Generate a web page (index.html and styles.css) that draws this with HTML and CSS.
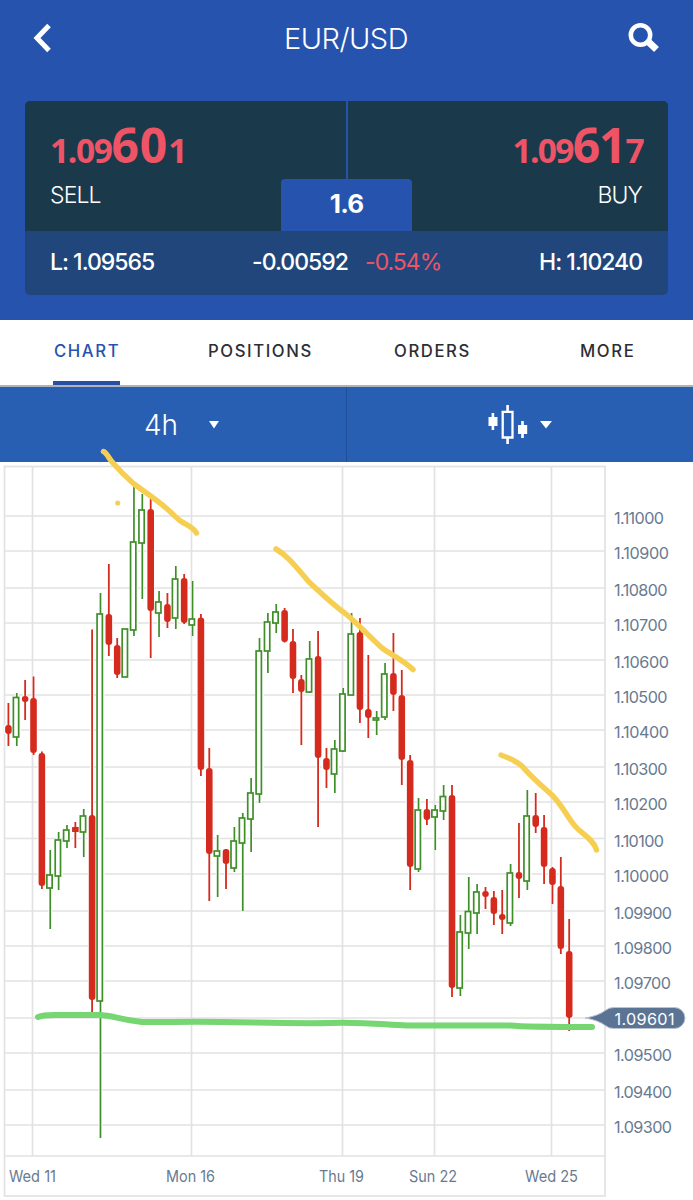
FILE: index.html
```html
<!DOCTYPE html>
<html lang="en">
<head>
<meta charset="utf-8">
<title>EUR/USD</title>
<link rel="stylesheet" href="styles.css">
</head>
<body>
<header class="header">
  <div class="nav">
    <svg class="back" width="20" height="30" viewBox="0 0 20 30"><path d="M16 2.5 4 15 16 27.500" fill="none" stroke="#fff" stroke-width="5"/></svg>
    <h1 class="title">EUR/USD</h1>
    <svg class="search" width="32" height="30" viewBox="0 0 32 30" fill="none" stroke="#fff"><circle cx="12.500" cy="12" r="9.700" stroke-width="4.500"/><path d="M19 17.500 28.500 26.500" stroke-width="7"/></svg>
  </div>
  <section class="quote">
    <div class="prices">
      <div class="side sell"><div class="price">1.09<b>60</b>1</div><div class="label">SELL</div></div>
      <div class="side buy"><div class="price">1.09<b>61</b>7</div><div class="label">BUY</div></div>
      <div class="spread">1.6</div>
    </div>
    <div class="stats">
      <span class="low">L: 1.09565</span>
      <span class="change">-0.00592 <span class="percent">-0.54%</span></span>
      <span class="high">H: 1.10240</span>
    </div>
  </section>
</header>
<nav class="tabs">
  <a class="tab active">CHART</a><a class="tab">POSITIONS</a><a class="tab">ORDERS</a><a class="tab">MORE</a>
</nav>
<div class="toolbar">
  <div class="tool period"><span>4h</span><svg width="10" height="8" viewBox="0 0 10 8"><path d="M0 0H10L5 7.500Z" fill="#fff"/></svg></div>
  <div class="tool style">
    <svg width="40" height="40" viewBox="0 0 40 40"><path d="M4.900 8V25M34.500 16V33M19.600 0V6M19.600 33V39" stroke="#fff" stroke-width="2.600"/><path d="M.5 12H9.500V21H.5ZM30 20H39.200V29H30Z" fill="#fff"/><path d="M14.700 6.800H24.500V32.500H14.700Z" fill="none" stroke="#fff" stroke-width="2.300"/></svg>
    <svg width="12" height="8" viewBox="0 0 12 8"><path d="M0 0H12L6 7.500Z" fill="#fff"/></svg>
  </div>
</div>
<svg class="chart" width="693" height="738" viewBox="0 462 693 738">
  <g id="grid"></g>
  <g id="candles"></g>
  <g id="labels"></g>
  <path d="M585 1018Q598 1016 606 1010Q609 1007.500 614 1007.500H674.500A10.500 10.500 0 0 1 674.500 1028.500H614Q609 1028.500 606 1026Q598 1020 585 1018Z" fill="#5b7494" stroke="#b9c4d1" stroke-width="1"/>
  <text class="axis current" x="614.500" y="1024.500" textLength="60">1.09601</text>
  <g class="trend">
    <path d="M103.500 451.500C107 453 109 459 113 463C119 470 126 477 134 484C145 492 157 500 166 508C172 513 176 518 182 522C189 526 194 528 196.500 533"/>
    <path d="M276 549C288 556 296 567 309 582C321 593 333 605 346 614C360 626 369 636 382 648C391 655 401 658 413 669.500"/>
    <path d="M501 755C509 758 516 761 522 766C532 778 541 785 552 795C562 805 568 818 575 826C582 834 594 840 596.500 850"/>
    <circle cx="117.700" cy="503" r="2.600"/>
  </g>
  <path class="support" d="M38 1017C43 1015 47 1015 54 1015H99C113 1015 119 1020 142 1022H174C230 1021 280 1024 330 1023C370 1022 385 1025 407 1025.500L510 1025.500C525 1027 540 1027 592 1027"/>
</svg>
<script src="chart.js"></script>
</body>
</html>
```
FILE: styles.css
```css
* { box-sizing: border-box; }
body { margin: 0; width: 693px; height: 1200px; overflow: hidden; background: #fff; font-family: Inter, "Liberation Sans", sans-serif; }
.header { height: 320px; background: #2653ae; padding: 0 25px; color: #fff; }
.nav { height: 101px; display: flex; align-items: flex-start; justify-content: space-between; padding: 23px 8px 0 8px; }
.title { margin: -1px 0 0 11px; font-size: 29px; line-height: 34px; font-weight: 300; letter-spacing: -.5px; }
.quote { height: 194px; border-radius: 5px; overflow: hidden; background: #20467c; }
.prices { position: relative; height: 130px; display: flex; background: #1a3a4c; }
.side { flex: 1; padding: 14px 25px 0; }
.buy { text-align: right; border-left: 2px solid #2653ae; }
.price { color: #ee5466; font-family: "Open Sans", sans-serif; font-size: 33.500px; line-height: 60px; height: 60px; font-weight: 700; letter-spacing: -1.400px; white-space: nowrap; }
.price b { font-size: 48px; font-weight: 700; letter-spacing: 1px; }
.buy .price { letter-spacing: -1.700px; }
.buy .price b { letter-spacing: -1px; }
.label { margin-top: 4px; font-size: 23px; line-height: 32px; font-weight: 300; letter-spacing: -.9px; }
.buy .label { margin-right: 1px; }
.spread { position: absolute; left: 256px; bottom: 0; width: 131px; height: 52px; border-radius: 4px 4px 0 0; background: #2653ae; text-align: center; font-size: 26px; line-height: 50px; font-weight: 700; letter-spacing: -.9px; }
.stats { display: flex; justify-content: space-between; padding: 0 26px 0 25px; font-size: 23px; line-height: 62px; font-weight: 500; letter-spacing: -1px; white-space: nowrap; }
.percent { color: #ee5466; font-weight: 400; margin-left: 12px; }
.tabs { height: 67px; display: grid; grid-template-columns: 154px 186px 186px auto; justify-items: start; padding-left: 53px; border-bottom: 2px solid #adb3b8; }
.tab { height: 65px; padding-left: 1px; font-size: 16.700px; line-height: 62px; font-weight: 500; letter-spacing: 1.600px; color: #2c2e33; }
.active { color: #2653ae; border-bottom: 4px solid #274fa5; }
.toolbar { height: 75px; display: flex; background: #285fb3; color: #fff; }
.tool { width: 50%; display: flex; align-items: center; }
.period { border-right: 1px solid #204f99; padding-left: 144px; gap: 31px; font-size: 28px; font-weight: 300; }
.style { padding-left: 141px; gap: 12px; }
.chart { display: block; overflow: visible; position: relative; }
.grid-line { stroke: #e2e2e2; stroke-width: 1.700; fill: none; }
.rise { stroke: #3f8f29; fill: none; stroke-width: 1.700; }
.fall { fill: #d52b1e; stroke: #d52b1e; stroke-width: 1.800; }
.halo { fill: #fff; stroke: none; }
.axis { fill: #687a91; font-size: 16.200px; font-weight: 400; }
.current { fill: #fff; }
.trend { fill: none; stroke: #f6cf52; stroke-width: 5.500; stroke-linecap: round; stroke-linejoin: round; }
.trend circle { fill: #f6cf52; stroke: none; }
.support { fill: none; stroke: #75d672; stroke-width: 6; stroke-linecap: round; }
```
FILE: chart.js
```js
// Each candle: direction, high, body top, body bottom, low.
const candles = [
  ["R",703,725,734,746],["G",693,697.5,737,746],["R",680,696,702,720],["R",676.5,698,753,755],
  ["R",751.5,753,886,889],["G",850,875,888,929],["G",832,840,876,890],["G",825,830,841,848],
  ["R",822,827,832,848],["G",809,816,832,857],["R",629.5,815,1000,1012],["G",593,614,1001,1138],
  ["R",564,614,645,656],["R",638,645,675,678],["G",629,629,677,677],["G",485,542,630,636],
  ["G",494,510,543,599],["R",499,509,611,658],["G",591,602,613,637],["R",593,604,622,628],
  ["G",566,579,618,629],["R",574,578,623,624],["G",581,619,625,636],["R",614,617.5,770,776],
  ["R",748,768,854,901],["G",835,851,856,897],["R",849,849,864,889],["G",827,841,868,872],
  ["G",813,818,843,911],["G",778,793,819,852],["G",638,651,794,803],["G",613,622,651,673],
  ["G",604,612,623,633],["R",608,610,642,642.5],["R",629,641,679,693],["R",675,679,692,745],
  ["G",641,659,692,693],["R",631,656,758,827],["R",748,758,770,788],["G",740,749,774,793],
  ["G",688,694,751,752],["G",613,634,695,695],["R",618,632,710,723],["R",655,709,718,738],
  ["G",711,718,720,735],["G",663,674,717,720],["R",633,673,695,711],["R",670,695,760,785],
  ["R",755,760,867,890],["G",798,810,869,872],["R",799,809,820,825],["G",805,810,817,850],
  ["G",785,796.5,811,820],["R",785,795,988,997],["G",915,932,988,996],["G",877,911.5,933,949],
  ["G",884,892,913,934],["R",887,891,897,909],["R",891,897,914,925],["R",890,914,920,934],
  ["G",864,873,923,926],["R",823,872,879,898],["G",790,816,881,890],["R",793,815,827,833],
  ["R",815,827,867,884],["R",867,868,885,904],["R",857,886,949,954],["R",919,951,1018,1031]
];
const first = 8.4, step = 8.37;
document.getElementById("candles").innerHTML = candles.map(([dir, hi, top, bottom, lo], i) => {
  const x = first + step * i;
  const halo = `<path class="halo" d="M${x - 4.3} ${top}H${x + 4.1}V${bottom}H${x - 4.3}ZM${x - 1.8} ${hi}H${x + 1.8}V${lo}H${x - 1.8}Z"/>`;
  return halo + (dir === "G"
    ? `<g class="rise"><path d="M${x} ${hi}V${top}M${x} ${bottom}V${lo}"/><rect x="${x - 3.4}" y="${top}" width="5.3" height="${bottom - top}"/></g>`
    : `<g class="fall"><path d="M${x} ${hi}V${lo}"/><rect x="${x - 3.3}" y="${top}" width="6.6" height="${bottom - top}" rx="${bottom - top < 6 ? 0.5 : 3}" stroke-width="0"/></g>`);
}).join("");

const rows = [[516,"1.11000",50],[551,"1.10900",55],[588,"1.10800",53.5],[623,"1.10700",53.5],[660,"1.10600",55],[695,"1.10500",53.5],
  [730,"1.10400",55],[767,"1.10300",53.5],[802,"1.10200",53.5],[838.5,"1.10100",50],[874,"1.10000",55],[911,"1.09900",58],
  [946,"1.09800",58],[981,"1.09700",57],[1018,"",0],[1053,"1.09500",58],[1090,"1.09400",58],[1125,"1.09300",58]];
const columns = [[32.5,"Wed 11",9,47],[191.5,"Mon 16",166,49],[342.5,"Thu 19",319,45],[434.5,"Sun 22",409,48],[551.5,"Wed 25",525,53]];
document.getElementById("grid").innerHTML =
  `<rect class="grid-line" x="4.500" y="466.5" width="600.500" height="729.5"/><path class="grid-line" d="M5 1156H605"/>` +
  rows.map(([y]) => `<path class="grid-line" d="M5 ${y}H605"/>`).join("") +
  columns.map(([x]) => `<path class="grid-line" d="M${x} 466V1156"/>`).join("");
document.getElementById("labels").innerHTML =
  rows.filter(r => r[1]).map(([y, t, w]) => `<text class="axis" x="614" y="${y + 8}" textLength="${w}">${t}</text>`).join("") +
  columns.map(([, t, x, w]) => `<text class="axis" x="${x}" y="1181.500" textLength="${w}" lengthAdjust="spacingAndGlyphs">${t}</text>`).join("");
```
